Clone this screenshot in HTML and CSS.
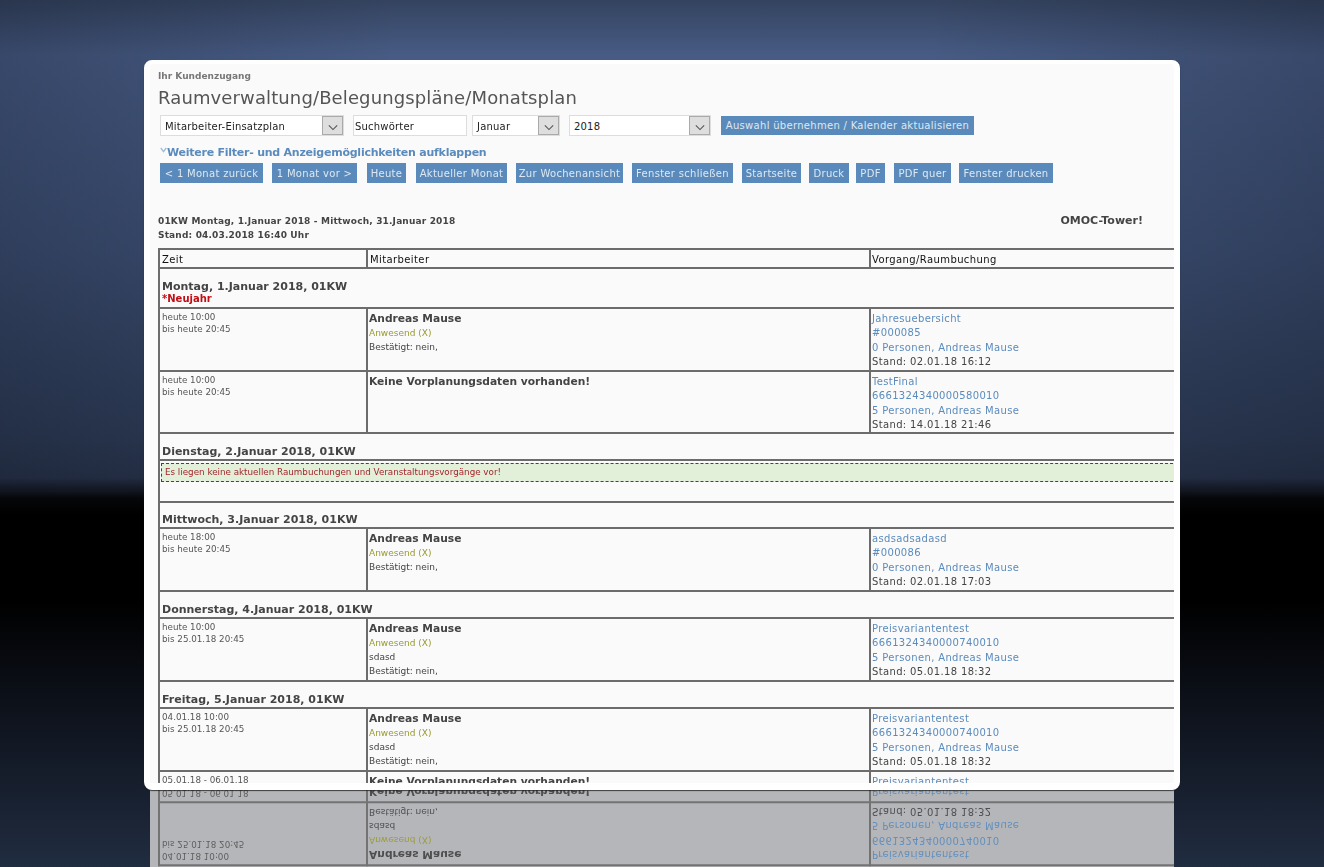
FILE: index.html
```html
<!DOCTYPE html>
<html lang="de">
<head>
<meta charset="utf-8">
<title>Monatsplan</title>
<link rel="stylesheet" href="styles.css">
</head>
<body>
<main class="stage">
  <section class="card">
    <div class="content">
      <p class="crumb">Ihr Kundenzugang</p>
      <h1 class="title">Raumverwaltung/Belegungspläne/Monatsplan</h1>
      <div class="controls">
        <div class="select w-type"><span class="select-text">Mitarbeiter-Einsatzplan</span><span class="arrow"><svg viewBox="0 0 12 8" width="10" height="7"><path d="M1 1.5 6 6.5 11 1.5" fill="none" stroke="#555" stroke-width="1.3"/></svg></span></div>
        <div class="select w-search"><span class="select-text">Suchwörter</span></div>
        <div class="select w-month"><span class="select-text">Januar</span><span class="arrow"><svg viewBox="0 0 12 8" width="10" height="7"><path d="M1 1.5 6 6.5 11 1.5" fill="none" stroke="#555" stroke-width="1.3"/></svg></span></div>
        <div class="select w-year"><span class="select-text">2018</span><span class="arrow"><svg viewBox="0 0 12 8" width="10" height="7"><path d="M1 1.5 6 6.5 11 1.5" fill="none" stroke="#555" stroke-width="1.3"/></svg></span></div>
        <a class="btn btn-apply">Auswahl übernehmen / Kalender aktualisieren</a>
      </div>
      <p class="more"><svg class="more-mark" viewBox="0 0 7 6" width="7" height="6"><path d="M.8 1 3.5 4.6 6.2 1" fill="none" stroke="#9dbbd8" stroke-width="1.3"/></svg>Weitere Filter- und Anzeigemöglichkeiten aufklappen</p>
      <nav class="buttons">
        <a class="btn">&lt; 1 Monat zurück</a>
        <a class="btn">1 Monat vor &gt;</a>
        <a class="btn">Heute</a>
        <a class="btn">Aktueller Monat</a>
        <a class="btn">Zur Wochenansicht</a>
        <a class="btn">Fenster schließen</a>
        <a class="btn">Startseite</a>
        <a class="btn">Druck</a>
        <a class="btn">PDF</a>
        <a class="btn">PDF quer</a>
        <a class="btn">Fenster drucken</a>
      </nav>
      <div class="info">
        <p class="info-text">01KW Montag, 1.Januar 2018 - Mittwoch, 31.Januar 2018<br>Stand: 04.03.2018 16:40 Uhr</p>
        <p class="tower">OMOC-Tower!</p>
      </div>
      <table class="plan">
        <colgroup><col class="c1"><col class="c2"><col class="c3"></colgroup>
        <tr class="r-head"><th>Zeit</th><th>Mitarbeiter</th><th>Vorgang/Raumbuchung</th></tr>
        <tr class="r-day-h"><td colspan="3" class="day">Montag, 1.Januar 2018, 01KW<span class="holiday">*Neujahr</span></td></tr>
        <tr class="r-a">
          <td class="time">heute 10:00<br>bis heute 20:45</td>
          <td class="person"><b>Andreas Mause</b><span class="present">Anwesend (X)</span><span class="small">Bestätigt: nein,</span></td>
          <td class="job"><a>Jahresuebersicht</a><a>#000085</a><a>0 Personen, Andreas Mause</a>Stand: 02.01.18 16:12</td>
        </tr>
        <tr class="r-b">
          <td class="time">heute 10:00<br>bis heute 20:45</td>
          <td class="person"><b>Keine Vorplanungsdaten vorhanden!</b></td>
          <td class="job"><a>TestFinal</a><a>6661324340000580010</a><a>5 Personen, Andreas Mause</a>Stand: 14.01.18 21:46</td>
        </tr>
        <tr class="r-day"><td colspan="3" class="day">Dienstag, 2.Januar 2018, 01KW</td></tr>
        <tr class="r-note"><td colspan="3" class="note-cell"><div class="note">Es liegen keine aktuellen Raumbuchungen und Veranstaltungsvorgänge vor!</div></td></tr>
        <tr class="r-day-s"><td colspan="3" class="day">Mittwoch, 3.Januar 2018, 01KW</td></tr>
        <tr class="r-a">
          <td class="time">heute 18:00<br>bis heute 20:45</td>
          <td class="person"><b>Andreas Mause</b><span class="present">Anwesend (X)</span><span class="small">Bestätigt: nein,</span></td>
          <td class="job"><a>asdsadsadasd</a><a>#000086</a><a>0 Personen, Andreas Mause</a>Stand: 02.01.18 17:03</td>
        </tr>
        <tr class="r-day"><td colspan="3" class="day">Donnerstag, 4.Januar 2018, 01KW</td></tr>
        <tr class="r-a">
          <td class="time">heute 10:00<br>bis 25.01.18 20:45</td>
          <td class="person"><b>Andreas Mause</b><span class="present">Anwesend (X)</span><span class="small">sdasd</span><span class="small">Bestätigt: nein,</span></td>
          <td class="job"><a>Preisvariantentest</a><a>6661324340000740010</a><a>5 Personen, Andreas Mause</a>Stand: 05.01.18 18:32</td>
        </tr>
        <tr class="r-day"><td colspan="3" class="day">Freitag, 5.Januar 2018, 01KW</td></tr>
        <tr class="r-a">
          <td class="time">04.01.18 10:00<br>bis 25.01.18 20:45</td>
          <td class="person"><b>Andreas Mause</b><span class="present">Anwesend (X)</span><span class="small">sdasd</span><span class="small">Bestätigt: nein,</span></td>
          <td class="job"><a>Preisvariantentest</a><a>6661324340000740010</a><a>5 Personen, Andreas Mause</a>Stand: 05.01.18 18:32</td>
        </tr>
        <tr class="r-a">
          <td class="time">05.01.18 - 06.01.18</td>
          <td class="person"><b>Keine Vorplanungsdaten vorhanden!</b></td>
          <td class="job"><a>Preisvariantentest</a></td>
        </tr>
      </table>
    </div>
  </section>
  <div class="reflection">
    <table class="plan plan-flipped">
      <colgroup><col class="c1"><col class="c2"><col class="c3"></colgroup>
      <tr class="r-a">
        <td class="time">04.01.18 10:00<br>bis 25.01.18 20:45</td>
        <td class="person"><b>Andreas Mause</b><span class="present">Anwesend (X)</span><span class="small">sdasd</span><span class="small">Bestätigt: nein,</span></td>
        <td class="job"><a>Preisvariantentest</a><a>6661324340000740010</a><a>5 Personen, Andreas Mause</a>Stand: 05.01.18 18:32</td>
      </tr>
      <tr class="r-tail">
        <td class="time">05.01.18 - 06.01.18</td>
        <td class="person"><b>Keine Vorplanungsdaten vorhanden!</b></td>
        <td class="job"><a>Preisvariantentest</a></td>
      </tr>
    </table>
  </div>
</main>
</body>
</html>
```
FILE: styles.css
```css
* { box-sizing: border-box; }
html, body { margin: 0; height: 100%; }
body {
  overflow: hidden;
  font-family: "DejaVu Sans", Verdana, sans-serif;
  background:
    linear-gradient(90deg, rgba(8,12,22,.24) 0, rgba(8,12,22,0) 30%, rgba(8,12,22,0) 70%, rgba(8,12,22,.24) 100%) 0 0 / 100% 490px no-repeat,
    linear-gradient(180deg, #34435f 0, #475b84 55px, #3c4e72 250px, #2c3a54 440px, #27324a 478px, #060709 498px, #000 515px, #000 600px, #0f141e 720px, #202c40 867px);
}
p, h1 { margin: 0; }
.stage {
  width: 1324px;
  height: 867px;
  padding: 60px 150px 0 144px;
}
.card {
  position: relative;
  z-index: 1;
  width: 1036px;
  height: 730px;
  background: #fafafa;
  border: solid #fff;
  border-width: 4px 6px 7px;
  border-radius: 8px;
  box-shadow: 0 1px 1px rgba(30,30,30,.8);
}
.content {
  height: 100%;
  padding: 6px 0 0 8px;
  overflow: hidden;
  filter: blur(.3px);
}
.crumb { font-size: 9px; font-weight: 700; line-height: 11px; color: #777; padding-top: 1px; }
.title {
  margin-top: 5px;
  font-size: 18px;
  font-weight: 400;
  line-height: 22px;
  letter-spacing: .12px;
  color: #555;
}
.controls { display: flex; align-items: center; margin: 6px 0 0 2px; height: 21px; }
.select {
  display: flex;
  align-items: center;
  justify-content: space-between;
  height: 21px;
  padding-left: 4px;
  background: #fff;
  border: 1px solid #ddd;
  font-size: 10px;
  letter-spacing: .2px;
  color: #222;
}
.select-text { padding-top: 2px; }
.w-type { width: 184px; margin-right: 9px; }
.w-search { width: 114px; margin-right: 5px; padding-left: 1px; }
.w-month { width: 88px; margin-right: 9px; }
.w-year { width: 142px; margin-right: 10px; }
.arrow {
  display: flex;
  align-items: center;
  justify-content: center;
  width: 21px;
  height: 19px;
  padding-top: 3px;
  background: #dedede;
  border: 1px solid #aaa;
}
.btn {
  display: block;
  flex: none;
  height: 20px;
  padding: 1px 0 0;
  background: #5a8abb;
  color: #dde8f2;
  font-size: 10px;
  line-height: 20px;
  letter-spacing: .3px;
  text-align: center;
  white-space: nowrap;
}
.btn-apply { width: 253px; height: 19px; line-height: 18px; }
.more {
  margin: 9px 0 0 2px;
  font-size: 11px;
  font-weight: 700;
  line-height: 15px;
  letter-spacing: -.24px;
  color: #5b8bbd;
}
.more-mark { margin: 0 0 3px 0; }
.buttons { display: flex; gap: 9px; margin: 3px 0 0 2px; }
.buttons .btn:nth-child(1) { width: 103px; }
.buttons .btn:nth-child(2) { width: 85px; }
.buttons .btn:nth-child(3) { width: 39px; margin-left: 1px; }
.buttons .btn:nth-child(4) { width: 91px; margin-left: 1px; }
.buttons .btn:nth-child(5) { width: 107px; }
.buttons .btn:nth-child(6) { width: 101px; }
.buttons .btn:nth-child(7) { width: 59px; }
.buttons .btn:nth-child(8) { width: 40px; margin-left: -1px; }
.buttons .btn:nth-child(9) { width: 29px; margin-left: -2px; }
.buttons .btn:nth-child(10) { width: 57px; }
.buttons .btn:nth-child(11) { width: 94px; margin-left: -1px; }
.info {
  display: flex;
  justify-content: space-between;
  margin-top: 31px;
  padding-right: 31px;
  color: #444;
}
.info-text { font-size: 9px; font-weight: 700; line-height: 14px; letter-spacing: .17px; }
.tower { font-size: 11px; font-weight: 700; line-height: 14px; }
.plan {
  width: 1030px;
  margin: 6px 0 0;
  table-layout: fixed;
  border-collapse: collapse;
  color: #444;
}
.c1 { width: 208px; }
.c2 { width: 503px; }
.c3 { width: 319px; }
.plan th, .plan td { border: 2px solid #6c6c6c; padding: 0 2px; vertical-align: top; }
.plan th { padding-top: 2px; font-size: 10px; font-weight: 400; line-height: 15px; letter-spacing: .4px; text-align: left; color: #111; }
.plan th:last-child { padding-left: 1px; }
.r-head { height: 19px; }
.r-day-h { height: 40px; }
.r-a { height: 63px; }
.r-b { height: 62px; }
.r-day { height: 27px; }
.r-day-s { height: 26px; }
.r-note { height: 42px; }
.r-tail { height: 17px; }
.plan td.day {
  vertical-align: bottom;
  padding-bottom: 0;
  font-size: 11px;
  font-weight: 700;
  line-height: 14px;
}
.r-day-h td.day { padding-bottom: 3px; }
.holiday { display: block; font-size: 10px; line-height: 10px; color: #c40d14; }
.plan td.time { font-size: 8.75px; line-height: 12px; padding-top: 2px; color: #555; }
.plan td.person { padding: 2px 2px 0 1px; }
.person b { display: block; font-size: 10.7px; line-height: 15px; }
.person { font-size: 9px; }
.present { display: block; line-height: 14px; color: #9a9a2c; }
.small { display: block; line-height: 14px; color: #444; }
.plan td.job { font-size: 10px; line-height: 14.25px; padding: 3px 2px 0 1px; letter-spacing: .35px; }
.job a { display: block; color: #5b8bbd; }
.plan td.note-cell { padding: 2px 0 0 1px; }
.note {
  height: 19px;
  padding-left: 3px;
  background: #e2efd9;
  border: 1px dashed #8e2430;
  border-right: 0;
  font-size: 8.75px;
  line-height: 17px;
  color: #a5262c;
}
.reflection {
  position: relative;
  width: 1024px;
  height: 79px;
  margin: -2px 0 0 6px;
  padding-left: 8px;
  overflow: hidden;
  background: #b5b6ba;
  filter: blur(.3px);
}
.plan-flipped {
  margin: -6px 0 0;
  opacity: .9;
  transform: scaleY(-1);
}
```
